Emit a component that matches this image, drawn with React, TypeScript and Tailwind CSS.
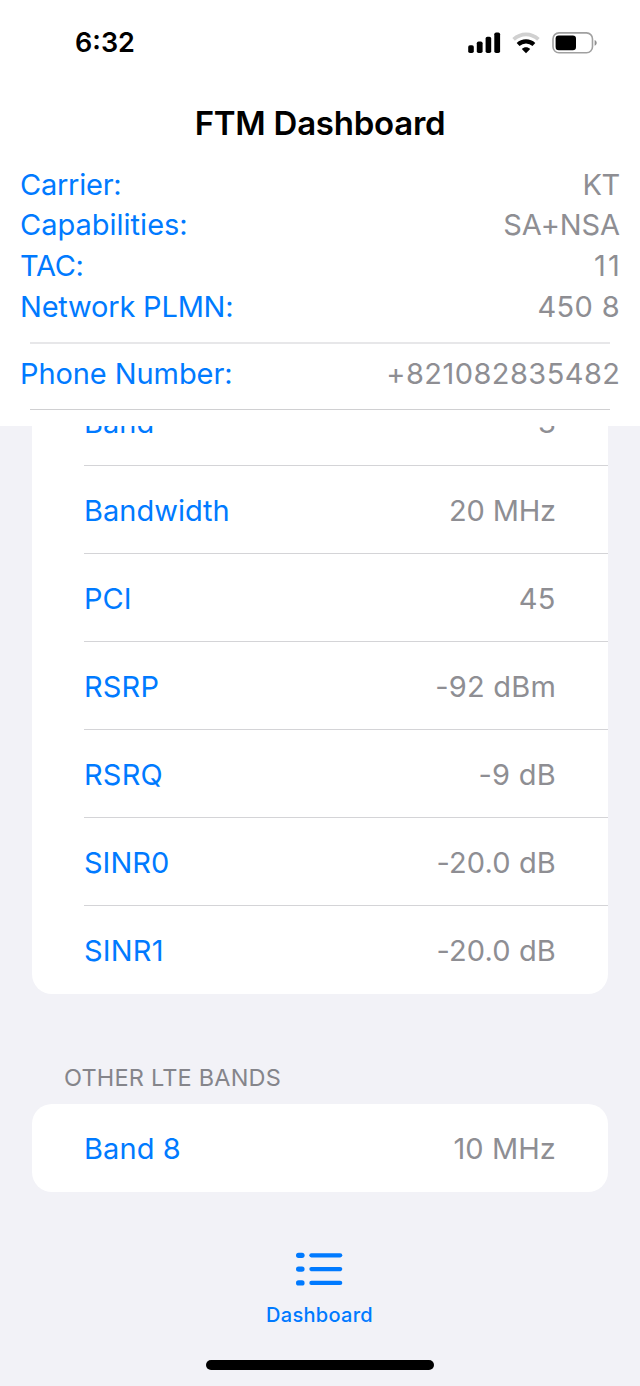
import React from 'react';

interface Item {
  label: string;
  value: string;
  labelCls?: string;
  valueCls?: string;
}

const networkInfo: Item[] = [
  { label: 'Carrier:', value: 'KT', labelCls: 'tracking-[-0.25px]', valueCls: 'tracking-[-0.3px]' },
  { label: 'Capabilities:', value: 'SA+NSA', valueCls: 'tracking-[-0.1px]' },
  { label: 'TAC:', value: '11', labelCls: 'tracking-[-0.3px]', valueCls: 'tracking-[2.2px] -mr-[2px]' },
  { label: 'Network PLMN:', value: '450 8', labelCls: 'tracking-[-0.2px]', valueCls: 'tracking-[0.35px]' },
];

const phone: Item = {
  label: 'Phone Number:',
  value: '+821082835482',
  labelCls: 'tracking-[-0.08px]',
  valueCls: 'tracking-[0.45px] -mr-[0.5px]',
};

const servingCell: Item[] = [
  { label: 'Band', value: '3' },
  { label: 'Bandwidth', value: '20 MHz', valueCls: 'tracking-[-0.15px]' },
  { label: 'PCI', value: '45', valueCls: 'tracking-[0.5px]' },
  { label: 'RSRP', value: '-92 dBm', labelCls: 'tracking-[0.15px]', valueCls: 'tracking-[0.2px]' },
  { label: 'RSRQ', value: '-9 dB', labelCls: 'tracking-[0.2px]', valueCls: 'tracking-[0.25px]' },
  { label: 'SINR0', value: '-20.0 dB', valueCls: 'tracking-[0.15px]' },
  { label: 'SINR1', value: '-20.0 dB', labelCls: 'tracking-[0.2px]', valueCls: 'tracking-[0.15px]' },
];

const otherBands: Item[] = [
  { label: 'Band 8', value: '10 MHz', labelCls: 'tracking-[0.1px]', valueCls: 'tracking-[0.1px]' },
];

function Pair({ item }: { item: Item }) {
  return (
    <>
      <span className={`text-[#007aff] ${item.labelCls ?? ''}`}>{item.label}</span>
      <span className={`text-[#8e8e93] ${item.valueCls ?? ''}`}>{item.value}</span>
    </>
  );
}

function InfoRow({ item }: { item: Item }) {
  return (
    <div className="flex h-[40.67px] items-center justify-between px-[20px] leading-none">
      <Pair item={item} />
    </div>
  );
}

function Card({ items }: { items: Item[] }) {
  return (
    <div className="mx-8 overflow-hidden rounded-[20px] bg-white">
      {items.map((item, i) => (
        <div
          key={item.label}
          className={`ml-[52px] flex h-[88px] items-center justify-between pr-[52px] leading-none ${
            i < items.length - 1 ? 'border-b border-[#d4d4d7] pt-[2px]' : ''
          }`}
        >
          <Pair item={item} />
        </div>
      ))}
    </div>
  );
}

function StatusBar() {
  return (
    <div className="flex h-[85px] items-center justify-between pl-[75px] pr-[42px]">
      <span className="text-[27px] font-semibold leading-none">6:32</span>
      <div className="flex items-center">
        <svg className="h-[22px] w-[34px]" viewBox="0 0 34 22">
          <rect x="0.2" y="13.2" width="5.6" height="7.8" rx="1.8" />
          <rect x="8.8" y="9.4" width="5.8" height="11.6" rx="1.8" />
          <rect x="17.6" y="4.8" width="5.6" height="16.2" rx="1.8" />
          <rect x="26.3" y="0.5" width="5.8" height="20.5" rx="1.8" />
        </svg>
        <svg className="ml-[10px] h-[22px] w-[28px]" viewBox="0 0 28 22" fill="none">
          <path d="M1.6 7.4C9 0.7 19 0.7 26.4 7.4" stroke="#d0d0d0" strokeWidth="3.8" />
          <path d="M6.1 12.5C10.6 8.4 17.4 8.4 21.9 12.5" stroke="#000" strokeWidth="4.2" />
          <path d="M14 21.2L9.8 17C12.2 14.7 15.8 14.7 18.2 17Z" fill="#000" />
        </svg>
        <svg className="ml-[12px] h-[22px] w-[46px]" viewBox="0 0 46 22">
          <rect x="1" y="0.9" width="39.5" height="19.9" rx="6" fill="none" stroke="#a0a0a0" strokeWidth="1.6" />
          <rect x="3.6" y="3.4" width="20.4" height="14.9" rx="3.2" />
          <path d="M42.6 8C45.4 9 45.4 12.8 42.6 13.8Z" fill="#8f8f8f" />
        </svg>
      </div>
    </div>
  );
}

export default function App() {
  return (
    <div className="flex h-[1386px] w-[640px] flex-col overflow-hidden bg-[#f2f2f7] font-['Inter',sans-serif] text-[29px] text-black">
      <header className="relative z-10 h-[426px] shrink-0 bg-white">
        <StatusBar />
        <h1 className="flex h-[79px] items-center justify-center pb-[3px] text-[33px] font-semibold leading-none tracking-[-0.25px]">
          FTM Dashboard
        </h1>
        {networkInfo.map((item) => (
          <InfoRow key={item.label} item={item} />
        ))}
        <div className="mx-[30px] mt-[15.3px] h-[2px] bg-[#e7e7e9]" />
        <div className="mt-[9px]">
          <InfoRow item={phone} />
        </div>
        <div className="mx-[30px] mt-[15.4px] h-px bg-[#d0d0d2]" />
      </header>

      <main className="min-h-0 flex-1 overflow-hidden">
        {/* list is scrolled, so the first row sits partly under the header */}
        <div className="-mt-[48px]">
          <Card items={servingCell} />
          <h2 className="mt-[72px] flex h-[24px] items-center pl-[64px] text-[23.5px] leading-none tracking-[0.2px] text-[#85858b]">
            OTHER LTE BANDS
          </h2>
          <div className="mt-[14px]">
            <Card items={otherBands} />
          </div>
        </div>
      </main>

      <nav className="flex h-[146px] shrink-0 flex-col items-center">
        <svg className="mt-[11px] h-[36px] w-[48px]" viewBox="0 0 48 36" fill="#007aff">
          {[1.7, 15.5, 29.3].map((y) => (
            <g key={y}>
              <rect x="0" y={y} width="8.6" height="5.2" rx="2.6" />
              <rect x="13.3" y={y + 0.5} width="33" height="4.2" rx="2.1" />
            </g>
          ))}
        </svg>
        <span className="mr-px mt-[18px] text-[20px] font-medium leading-[20px] tracking-[0.28px] text-[#007aff]">
          Dashboard
        </span>
        <div className="mt-[35px] h-[10px] w-[228px] rounded-full bg-black" />
      </nav>
    </div>
  );
}
